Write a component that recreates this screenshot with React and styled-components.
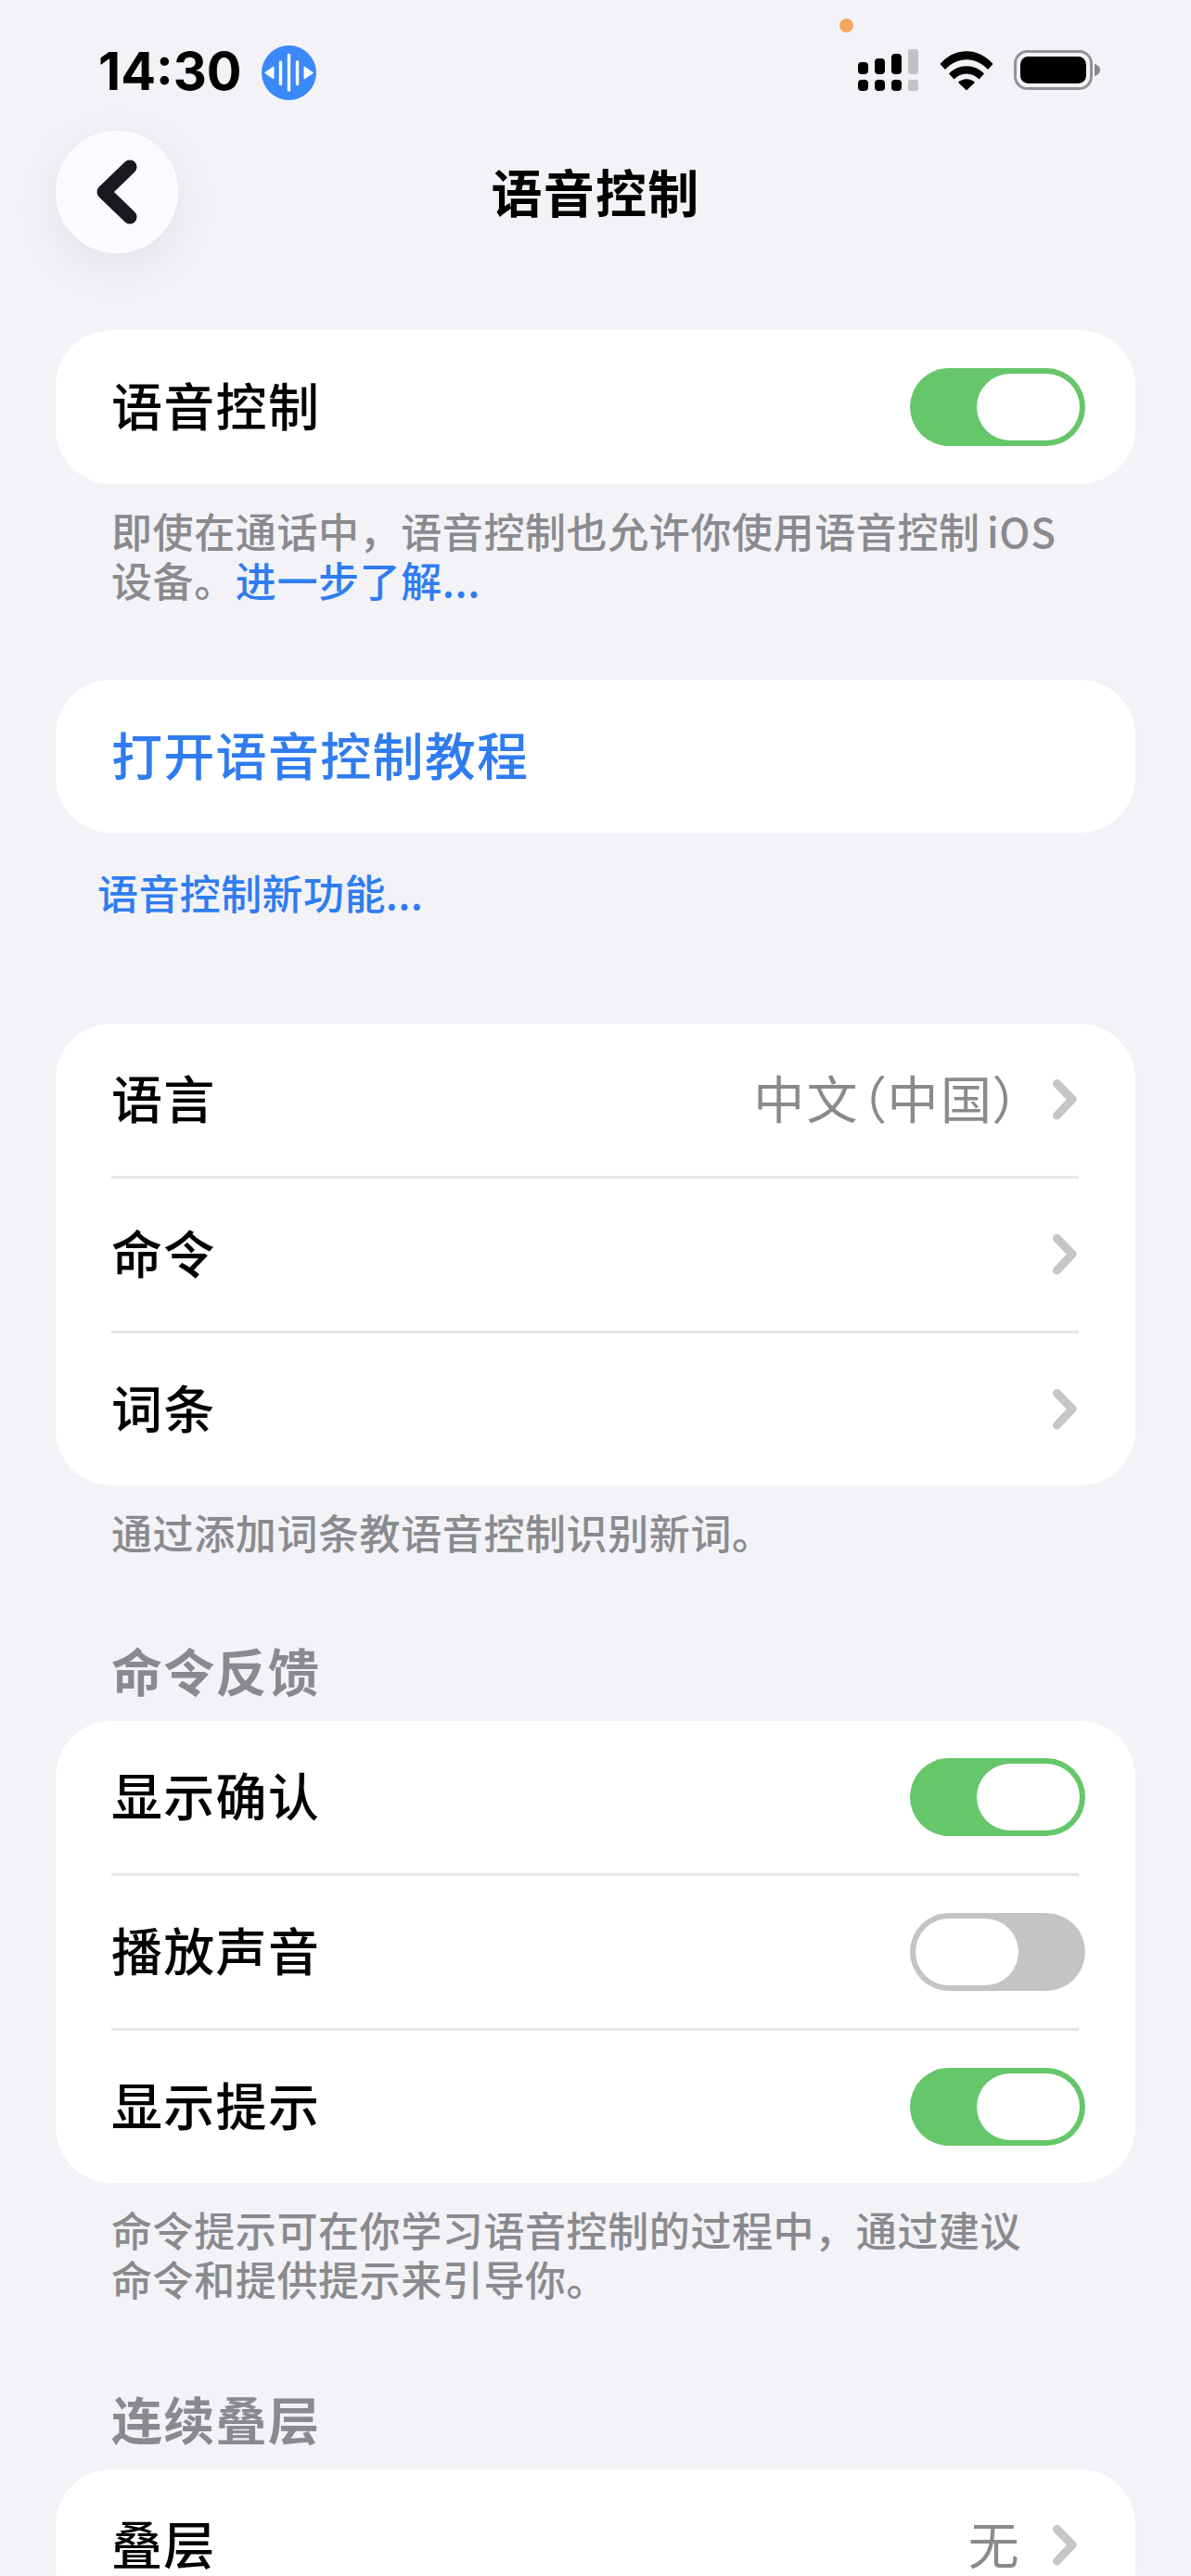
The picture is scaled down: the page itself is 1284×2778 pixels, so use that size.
import React from "react";
import styled, { createGlobalStyle } from "styled-components";

const Global = createGlobalStyle`
  html, body { margin: 0; padding: 0; background: #f2f2f7; }
  body { font-family: "Noto Sans CJK SC", "Liberation Sans", sans-serif; }
`;

const Screen = styled.div`
  position: relative;
  width: 1284px;
  height: 2778px;
  overflow: hidden;
  background: #f2f2f7;
`;

const StatusBar = styled.div`
  height: 141px;
  box-sizing: border-box;
  padding: 49px 0 0 106px;
  display: flex;
  align-items: flex-start;
`;

const Time = styled.div`
  font-family: Inter, "Liberation Sans", sans-serif;
  font-weight: 700;
  font-size: 56px;
  line-height: 56px;
  color: #000;
`;

const VoiceBadge = styled.svg`
  width: 59px;
  height: 59px;
  margin-left: 21px;
  flex: none;
`;

const OrangeDot = styled.div`
  position: absolute;
  left: 905px;
  top: 20px;
  width: 15px;
  height: 15px;
  border-radius: 50%;
  background: #f2a65e;
`;

const StatusIcons = styled.div`
  margin-left: auto;
  margin-right: 97px;
  margin-top: 4px;
  display: flex;
  align-items: flex-start;
  gap: 22px;
`;

const Nav = styled.div`
  height: 132px;
  padding: 0 60px;
  display: grid;
  grid-template-columns: 132px 1fr 132px;
  align-items: center;
`;

const BackButton = styled.div`
  width: 132px;
  height: 132px;
  box-sizing: border-box;
  border-radius: 50%;
  background: #fafaff;
  border: 2px solid #fdfdff;
  box-shadow: 0 14px 50px rgba(0, 0, 0, 0.07);
  display: flex;
  align-items: center;
  justify-content: center;
`;

const Title = styled.div`
  text-align: center;
  font-weight: 700;
  font-size: 55px;
  letter-spacing: 1.3px;
  line-height: 66px;
  padding-bottom: 5px;
  color: #000;
`;

const Content = styled.div`
  padding: 83px 60px 0;
`;

const Card = styled.div`
  background: #fff;
  border-radius: 60px;
  margin-top: ${(p) => p.$top || 0}px;
  overflow: hidden;
`;

const Row = styled.div`
  height: ${(p) => p.$height || 164}px;
  margin: 0 61px 0 60px;
  display: flex;
  align-items: center;
  justify-content: space-between;
  & + & {
    border-top: 3px solid #e6e6e8;
  }
`;

const RowLabel = styled.div`
  font-size: 55px;
  font-weight: 500;
  letter-spacing: 1.3px;
  line-height: 66px;
  padding-bottom: 8px;
  color: ${(p) => (p.$link ? "#2f7cf0" : "#000")};
`;

const RowEnd = styled.div`
  display: flex;
  align-items: center;
  gap: 34px;
`;

const RowValue = styled.div`
  font-size: 55px;
  font-feature-settings: "palt";
  letter-spacing: 2.3px;
  line-height: 66px;
  padding-bottom: 8px;
  color: #8a8a8e;
`;

const Chevron = styled.svg`
  width: 26px;
  height: 44px;
  margin-right: 2px;
  flex: none;
`;

const Toggle = styled.div`
  width: 189px;
  height: 84px;
  margin-right: -7px;
  box-sizing: border-box;
  padding: 6px;
  border-radius: 42px;
  background: ${(p) => (p.$on ? "#66c66a" : "#c4c4c4")};
  display: flex;
  justify-content: ${(p) => (p.$on ? "flex-end" : "flex-start")};
`;

const Knob = styled.div`
  width: 111px;
  height: 72px;
  border-radius: 36px;
  background: #fff;
`;

const Footer = styled.div`
  margin: ${(p) => p.$top || 24}px 40px 0 60px;
  font-size: 44px;
  font-weight: 500;
  line-height: 53px;
  letter-spacing: 0.6px;
  word-spacing: -3px;
  color: #8a8a8e;
`;

const Link = styled.span`
  color: #2f7cf0;
`;

const NewLink = styled.div`
  margin: 38px 0 0 45px;
  font-size: 44px;
  font-weight: 500;
  line-height: 53px;
  letter-spacing: 0.4px;
  color: #2f7cf0;
`;

const SectionHeader = styled.div`
  margin: ${(p) => p.$top}px 0 23px 60px;
  font-size: 55px;
  font-weight: 700;
  letter-spacing: 1.3px;
  line-height: 66px;
  color: #8a8a8e;
`;

const Arrow = () => (
  <Chevron viewBox="0 0 26 44" aria-hidden="true">
    <path d="M4.5 4.5 L21 21.5 L4.5 39" fill="none" stroke="#c6c6c6" strokeWidth="9" strokeLinecap="round" strokeLinejoin="round" />
  </Chevron>
);

const Switch = ({ on }) => (
  <Toggle $on={on}>
    <Knob />
  </Toggle>
);

const Signal = () => (
  <svg width="66" height="46" viewBox="0 0 66 46" aria-hidden="true" style={{ flex: "none" }}>
    <g fill="#000">
      <rect x="0" y="14" width="11" height="13" rx="4" />
      <rect x="18" y="10" width="11" height="17" rx="4" />
      <rect x="36" y="5" width="11" height="22" rx="4" />
      <rect x="0" y="33" width="11" height="12" rx="4" />
      <rect x="18" y="33" width="11" height="12" rx="4" />
      <rect x="36" y="33" width="11" height="12" rx="4" />
    </g>
    <g fill="#c2c2c6">
      <rect x="54" y="0" width="11" height="27" rx="3" />
      <rect x="54" y="33" width="11" height="12" rx="3" />
    </g>
  </svg>
);

const Wifi = () => (
  <svg width="58" height="44" viewBox="0 0 58 44" aria-hidden="true" style={{ flex: "none", marginTop: 1 }}>
    <path d="M0.5 15 C16 -3.5 42 -3.5 57.5 15 L52 21 C39 6.5 19 6.5 6 21 Z" fill="#000" />
    <path d="M10 25.5 C20 14.5 38 14.5 48 25.5 L42.5 31.5 C35 23.5 23 23.5 15.5 31.5 Z" fill="#000" />
    <path d="M20 35 C25 30 33 30 38 35 L29 43.5 Z" fill="#000" />
  </svg>
);

const Battery = () => (
  <svg width="94" height="44" viewBox="0 0 94 44" aria-hidden="true" style={{ flex: "none", marginTop: 1 }}>
    <rect x="1.5" y="1.5" width="82" height="40" rx="13" fill="none" stroke="#929296" strokeWidth="3" />
    <rect x="7" y="7" width="71" height="29" rx="8.5" fill="#000" />
    <path d="M87 15 C91 16 93 19 93 21.5 C93 24 91 27 87 28 Z" fill="#8a8a8e" />
  </svg>
);

export default function App() {
  return (
    <Screen>
      <Global />
      <OrangeDot />
      <StatusBar>
        <Time>14:30</Time>
        <VoiceBadge viewBox="0 0 59 59" aria-hidden="true">
          <circle cx="29.5" cy="29.5" r="29.5" fill="#3b89f9" />
          <g stroke="#fff" strokeWidth="3.4" strokeLinecap="round">
            <line x1="20.5" y1="18" x2="20.5" y2="41.5" />
            <line x1="29.5" y1="10.5" x2="29.5" y2="48" />
            <line x1="38.5" y1="18" x2="38.5" y2="41.5" />
          </g>
          <path d="M3.5 29.5 L13 23 V36 Z M55.5 29.5 L46 23 V36 Z" fill="#fff" stroke="#fff" strokeWidth="1" strokeLinejoin="round" />
        </VoiceBadge>
        <StatusIcons>
          <Signal />
          <Wifi />
          <Battery />
        </StatusIcons>
      </StatusBar>

      <Nav>
        <BackButton>
          <svg width="46" height="72" viewBox="0 0 46 72" aria-hidden="true">
            <path d="M37 9 L9 36 L37 63" fill="none" stroke="#1a1a1e" strokeWidth="15" strokeLinecap="round" strokeLinejoin="round" />
          </svg>
        </BackButton>
        <Title>语音控制</Title>
        <div />
      </Nav>

      <Content>
        <Card>
          <Row $height={166}>
            <RowLabel>语音控制</RowLabel>
            <Switch on />
          </Row>
        </Card>
        <Footer>
          即使在通话中，语音控制也允许你使用语音控制 iOS
          <br />
          设备。<Link>进一步了解...</Link>
        </Footer>

        <Card $top={81}>
          <Row $height={165}>
            <RowLabel $link>打开语音控制教程</RowLabel>
          </Row>
        </Card>
        <NewLink>语音控制新功能...</NewLink>

        <Card $top={115}>
          <Row>
            <RowLabel>语言</RowLabel>
            <RowEnd>
              <RowValue>中文（中国）</RowValue>
              <Arrow />
            </RowEnd>
          </Row>
          <Row>
            <RowLabel>命令</RowLabel>
            <Arrow />
          </Row>
          <Row>
            <RowLabel>词条</RowLabel>
            <Arrow />
          </Row>
        </Card>
        <Footer>通过添加词条教语音控制识别新词。</Footer>

        <SectionHeader $top={88}>命令反馈</SectionHeader>
        <Card>
          <Row>
            <RowLabel>显示确认</RowLabel>
            <Switch on />
          </Row>
          <Row>
            <RowLabel>播放声音</RowLabel>
            <Switch />
          </Row>
          <Row>
            <RowLabel>显示提示</RowLabel>
            <Switch on />
          </Row>
        </Card>
        <Footer>
          命令提示可在你学习语音控制的过程中，通过建议
          <br />
          命令和提供提示来引导你。
        </Footer>

        <SectionHeader $top={90}>连续叠层</SectionHeader>
        <Card>
          <Row>
            <RowLabel>叠层</RowLabel>
            <RowEnd>
              <RowValue>无</RowValue>
              <Arrow />
            </RowEnd>
          </Row>
        </Card>
      </Content>
    </Screen>
  );
}
